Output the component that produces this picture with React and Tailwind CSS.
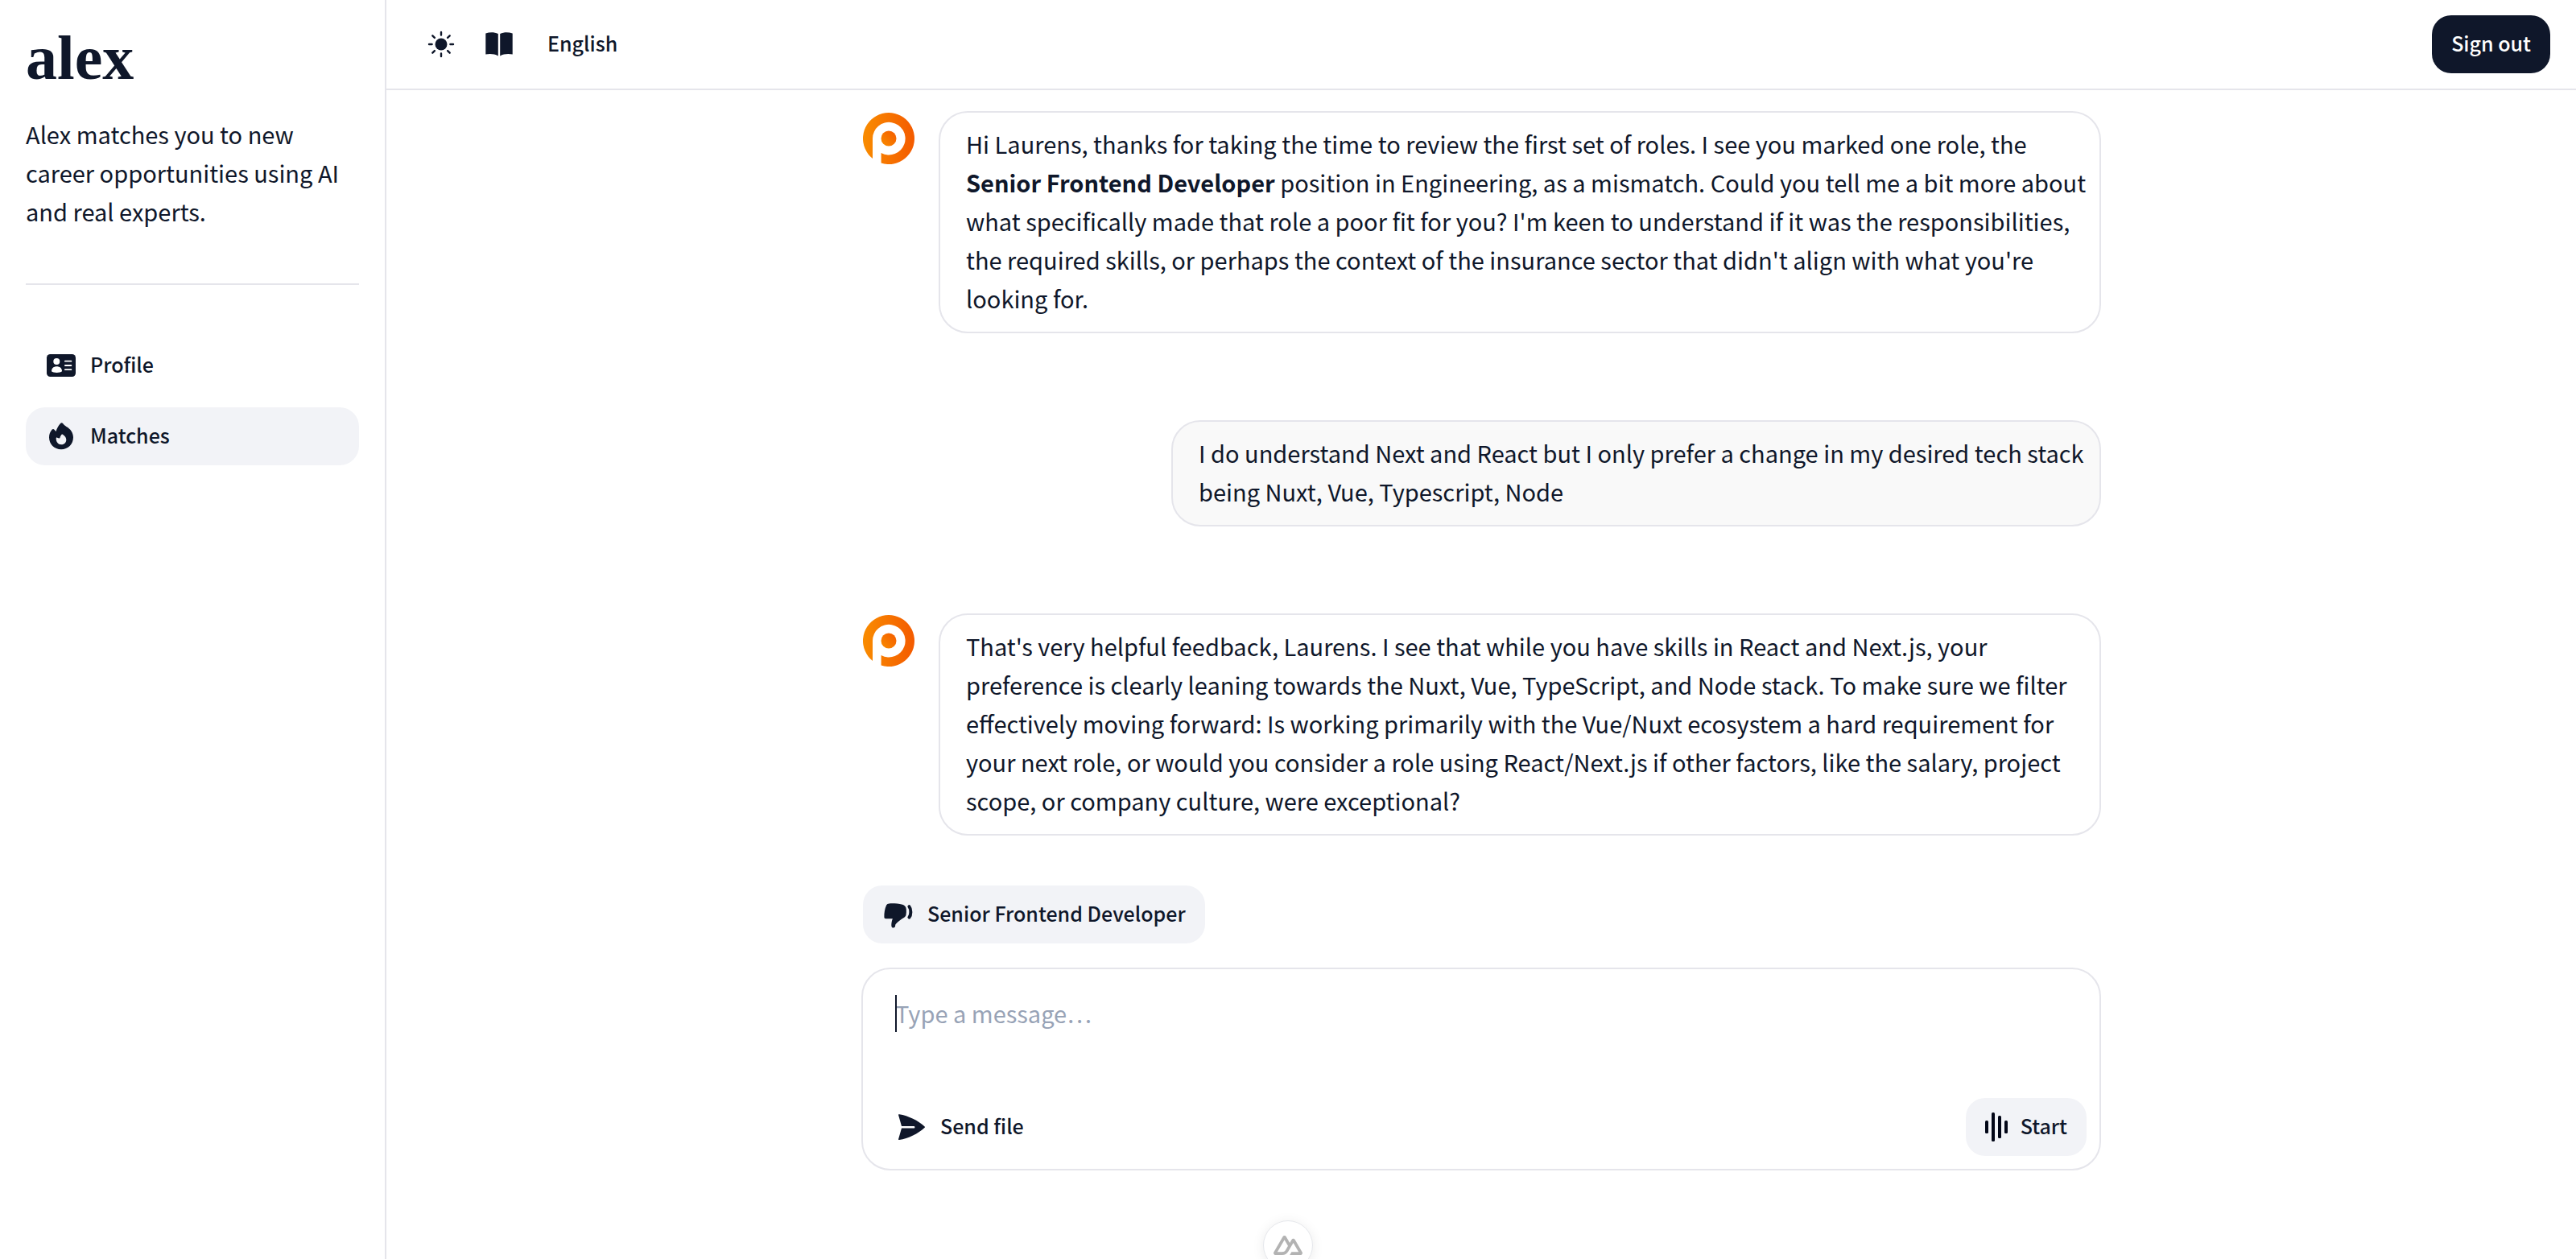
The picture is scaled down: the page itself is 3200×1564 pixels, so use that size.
const navItems = [
	{ label: "Profile", icon: ProfileIcon, active: false },
	{ label: "Matches", icon: FlameIcon, active: true },
];

function ProfileIcon() {
	return (
		<svg viewBox="0 0 40 40" className="size-10 shrink-0" aria-hidden="true">
			<rect x="2" y="6" width="36" height="28" rx="4.5" fill="currentColor" />
			<g className="fill-white">
				<circle cx="14.3" cy="15" r="4" />
				<path d="M8 27.2c0-4 2.8-6 6.500-6s6.500 2 6.500 6c-1.200 1.200-3.600 1.700-6.500 1.700S9.200 28.400 8 27.200z" />
				<rect x="24" y="13.7" width="9.3" height="1.9" rx=".9" />
				<rect x="24" y="19" width="9.3" height="1.9" rx=".9" />
				<rect x="24" y="24.2" width="9.3" height="1.9" rx=".9" />
			</g>
		</svg>
	);
}

function FlameIcon() {
	return (
		<svg viewBox="0 0 40 40" className="size-10 shrink-0" aria-hidden="true">
			<path
				fill="currentColor"
				fillRule="evenodd"
				d="M19.1 4c.9-.9 2.200-.8 3 .1 1.300 1.600 2.600 2.900 4.300 3.800C31.400 10.600 35 15.300 35 21.300 35 29.900 28.500 36.300 20 36.300S5 29.900 5 21.300c0-3.500 1.300-7 3.700-9.700.8-.9 2-.8 2.800.1l2 2.200C14.700 10.300 16.400 6.800 19.100 4zM20 30.300c3.700 0 6.300-2.500 6.300-6.100 0-2.400-1.500-4.500-4.300-6.400-.7-.5-1.500-.3-1.900.4-.9 1.400-1.500 2.700-1.800 4.100-1.100.3-2-.1-3.100-.6-.8-.3-1.500.1-1.500.9 0 4.700 2.500 7.700 6.300 7.700z"
			/>
		</svg>
	);
}

function SunIcon() {
	return (
		<svg viewBox="0 0 40 40" className="size-10" aria-hidden="true">
			<circle cx="20" cy="20" r="7.5" fill="currentColor" />
			<path
				d="M20 5v3.600M20 31.400V35M5 20h3.600M31.400 20H35M9.300 9.300l2.600 2.600M28.100 28.100l2.600 2.600M9.300 30.700l2.600-2.600M28.100 11.900l2.600-2.600"
				stroke="currentColor"
				strokeWidth="2.4"
				strokeLinecap="round"
			/>
		</svg>
	);
}

function BookIcon() {
	return (
		<svg viewBox="0 0 40 40" className="size-10" aria-hidden="true">
			<path
				fill="currentColor"
				d="M3.300 6.600C8.300 4.700 14 4.700 18.800 7v27.400c-4.600-2.600-10.300-3-15.500-1.900zM36.700 6.600C31.700 4.700 26 4.700 21.200 7v27.400c4.600-2.600 10.300-3 15.500-1.900z"
			/>
		</svg>
	);
}

function ThumbDownIcon() {
	return (
		<svg viewBox="0 0 40 40" className="size-10 shrink-0" aria-hidden="true">
			<path
				fill="currentColor"
				d="M8.600 6.400c5.400-.3 11 .1 16.500 1.400 2.600.6 4.400 2.700 4.700 5.600.2 2.600.1 4.900-.3 7.100-.3 1.500-1 2.400-2.300 3.200-4 2.300-7.400 4.800-10.300 8-.6.7-.8 1.500-.8 2.400 0 1.500-.8 2.500-2.200 2.500-1.900 0-2.700-1.500-2.600-3.700.1-2.700.6-5.100 1.600-7.600H4.400c-1.300 0-2-.7-2-2C2.300 18.500 3 13 5.100 8.600c.7-1.400 1.800-2.100 3.500-2.200z"
			/>
			<path
				d="M33.400 10.200c2.600 3 2.600 10.400 0 13.400"
				fill="none"
				stroke="currentColor"
				strokeWidth="4"
				strokeLinecap="round"
			/>
		</svg>
	);
}

function SendIcon() {
	return (
		<svg viewBox="0 0 40 40" className="size-10 shrink-0" aria-hidden="true">
			<path
				fill="currentColor"
				d="M5.100 4.200C16.400 6 28.700 12 36.700 19.400c.4.400.4.900 0 1.300C28.700 28.200 16.400 34.200 5.100 36c-.8.100-1.200-.4-1-1.100L8 21.500h15.200c.8 0 1.200-.6 1.200-1.300s-.4-1.300-1.200-1.300H8L4.100 5.300c-.2-.8.2-1.200 1-1.100z"
			/>
		</svg>
	);
}

function VoiceIcon() {
	return (
		<svg viewBox="0 0 28 40" className="h-10 w-7 shrink-0" aria-hidden="true">
			<g className="fill-[#020617]">
				<rect x="0" y="12" width="4" height="16" rx="1.5" />
				<rect x="8" y="2" width="4" height="36" rx="1.5" />
				<rect x="16" y="6" width="4" height="28" rx="1.5" />
				<rect x="24" y="12" width="4" height="16" rx="1.5" />
			</g>
		</svg>
	);
}

function Avatar() {
	return (
		<svg viewBox="0 0 64 64" className="mt-0.5 size-16 shrink-0" role="img" aria-label="Alex">
			<defs>
				<linearGradient id="ring" x1="0" y1="0" x2="1" y2="0">
					<stop offset="0" stopColor="#f98c00" />
					<stop offset="1" stopColor="#f45b00" />
				</linearGradient>
				<linearGradient id="dot" x1="1" y1="0" x2="0" y2="1">
					<stop offset="0" stopColor="#f45b00" />
					<stop offset="1" stopColor="#f98c00" />
				</linearGradient>
			</defs>
			<path
				fill="url(#ring)"
				d="M12 57A32 32 0 1 1 22.600 62.600V50A20.300 20.300 0 1 0 12 32z"
			/>
			<circle cx="32" cy="32" r="9.5" fill="url(#dot)" />
		</svg>
	);
}

function NuxtIcon() {
	return (
		<svg viewBox="0 54 324 216" className="h-6 w-9" aria-hidden="true">
			<path
				fill="#b3b3b3"
				d="M181.767 270H302.211C306.037 270 309.795 269.003 313.108 267.107C316.421 265.211 319.172 262.484 321.084 259.200C322.996 255.915 324.002 252.190 324 248.399C323.998 244.607 322.989 240.883 321.074 237.601L240.187 98.744C238.275 95.461 235.525 92.734 232.213 90.839C228.901 88.943 225.143 87.945 221.318 87.945C217.494 87.945 213.736 88.943 210.424 90.839C207.112 92.734 204.361 95.461 202.449 98.744L181.767 134.272L141.329 64.797C139.416 61.514 136.664 58.788 133.351 56.893C130.038 54.998 126.280 54 122.454 54C118.629 54 114.871 54.998 111.558 56.893C108.245 58.788 105.493 61.514 103.580 64.797L2.926 237.601C1.011 240.883 0 244.607 0 248.399C0 252.190 1.004 255.915 2.916 259.200C4.828 262.484 7.579 265.211 10.892 267.107C14.205 269.003 17.963 270 21.789 270H97.394C127.349 270 149.440 256.959 164.641 231.517L201.546 168.172L221.313 134.272L280.637 236.100H201.546L181.767 270ZM96.161 236.065L43.398 236.054L122.490 100.291L161.953 168.172L135.531 213.543C125.436 230.051 113.968 236.065 96.161 236.065Z"
			/>
		</svg>
	);
}

function Label({ children }) {
	return <span className="pb-1 text-[25px] leading-9 font-medium whitespace-nowrap">{children}</span>;
}

function Sidebar() {
	return (
		<aside className="w-[480px] shrink-0 border-r-2 border-[#e5e5eb] px-8 pt-6">
			<a href="#" className="block font-['Liberation_Serif'] text-[78px] leading-[96px] font-bold">
				alex
			</a>
			<p className="mt-[22px]">
				Alex matches you to new career opportunities using AI and real experts.
			</p>
			<hr className="mt-[66px] border-t-2 border-[#e5e5eb]" />
			<nav className="mt-16 flex flex-col gap-4">
				{navItems.map(({ label, icon: Icon, active }) => (
					<a
						key={label}
						href="#"
						className={`flex h-[72px] items-center gap-4 rounded-3xl px-6 ${active ? "bg-[#f2f3f7]" : ""}`}
					>
						<Icon />
						<Label>{label}</Label>
					</a>
				))}
			</nav>
		</aside>
	);
}

function Header() {
	return (
		<header className="flex h-28 items-center justify-between border-b-2 border-[#e5e5eb] pr-8 pl-12">
			<div className="flex items-center gap-8">
				<button type="button" aria-label="Toggle theme">
					<SunIcon />
				</button>
				<button type="button" aria-label="Guide">
					<BookIcon />
				</button>
				<button type="button" className="flex px-2">
					<Label>English</Label>
				</button>
			</div>
			<button
				type="button"
				className="flex h-[72px] items-center rounded-3xl bg-[#0f172a] px-6 text-white"
			>
				<Label>Sign out</Label>
			</button>
		</header>
	);
}

function AlexMessage({ children }) {
	return (
		<div className="flex gap-[30px] pl-0.5">
			<Avatar />
			<p className="flex-1 rounded-[36px] border-2 border-[#e5e5eb] pt-[14px] pr-3 pb-[18px] pl-8">
				{children}
			</p>
		</div>
	);
}

function UserMessage({ children }) {
	return (
		<p className="w-3/4 self-end rounded-[36px] border-2 border-[#e5e5eb] bg-[#f9f9f9] pt-[14px] pr-3 pb-[18px] pl-8">
			{children}
		</p>
	);
}

function Composer() {
	return (
		<form className="relative mt-[30px] rounded-[36px] border-2 border-[#e5e5eb]">
			<textarea
				aria-label="Message"
				placeholder="Type a message…"
				className="block h-36 w-full resize-none px-10 pt-[30px] caret-transparent outline-none placeholder:text-[#98a3b6]"
			/>
			{/* Text caret */}
			<span className="absolute top-8 left-10 h-[46px] w-0.5 bg-[#0f172a]" />
			<div className="flex justify-between p-4">
				<button type="button" className="flex h-[72px] items-center gap-4 px-6">
					<SendIcon />
					<Label>Send file</Label>
				</button>
				<button
					type="button"
					className="flex h-[72px] items-center gap-4 rounded-3xl bg-[#f2f3f7] px-6"
				>
					<VoiceIcon />
					<Label>Start</Label>
				</button>
			</div>
		</form>
	);
}

function App() {
	return (
		<div className="flex min-h-screen bg-white font-['Noto_Sans_CJK_SC',sans-serif] text-[29px] leading-[48px] text-[#0f172a]">
			<Sidebar />
			<div className="min-w-0 flex-1">
				<Header />
				<main className="mx-auto flex max-w-[1540px] flex-col pt-[26px]">
					<div className="flex flex-col gap-[108px]">
						<AlexMessage>
							Hi Laurens, thanks for taking the time to review the first set of roles. I see you
							marked one role, the <strong className="font-bold">Senior Frontend Developer</strong>{" "}
							position in Engineering, as a mismatch. Could you tell me a bit more about what
							specifically made that role a poor fit for you? I'm keen to understand if it was the
							responsibilities, the required skills, or perhaps the context of the insurance sector
							that didn't align with what you're looking for.
						</AlexMessage>
						<UserMessage>
							I do understand Next and React but I only prefer a change in my desired tech stack
							being Nuxt, Vue, Typescript, Node
						</UserMessage>
						<AlexMessage>
							That's very helpful feedback, Laurens. I see that while you have skills in React and
							Next.js, your preference is clearly leaning towards the Nuxt, Vue, TypeScript, and
							Node stack. To make sure we filter effectively moving forward: Is working primarily
							with the Vue/Nuxt ecosystem a hard requirement for your next role, or would you
							consider a role using React/Next.js if other factors, like the salary, project scope,
							or company culture, were exceptional?
						</AlexMessage>
					</div>
					<button
						type="button"
						className="mt-[62px] ml-0.5 flex h-[72px] items-center gap-4 self-start rounded-3xl bg-[#f2f3f7] px-6"
					>
						<ThumbDownIcon />
						<Label>Senior Frontend Developer</Label>
					</button>
					<Composer />
				</main>
			</div>

			{/* Devtools toggle, tucked into the bottom edge */}
			<button
				type="button"
				aria-label="Toggle devtools"
				className="fixed -bottom-3.5 left-1/2 flex size-[62px] -translate-x-1/2 items-center justify-center rounded-full border border-gray-200 bg-white shadow-[0_2px_15px_rgba(0,0,0,0.08)]"
			>
				<NuxtIcon />
			</button>
		</div>
	);
}

export default App;
